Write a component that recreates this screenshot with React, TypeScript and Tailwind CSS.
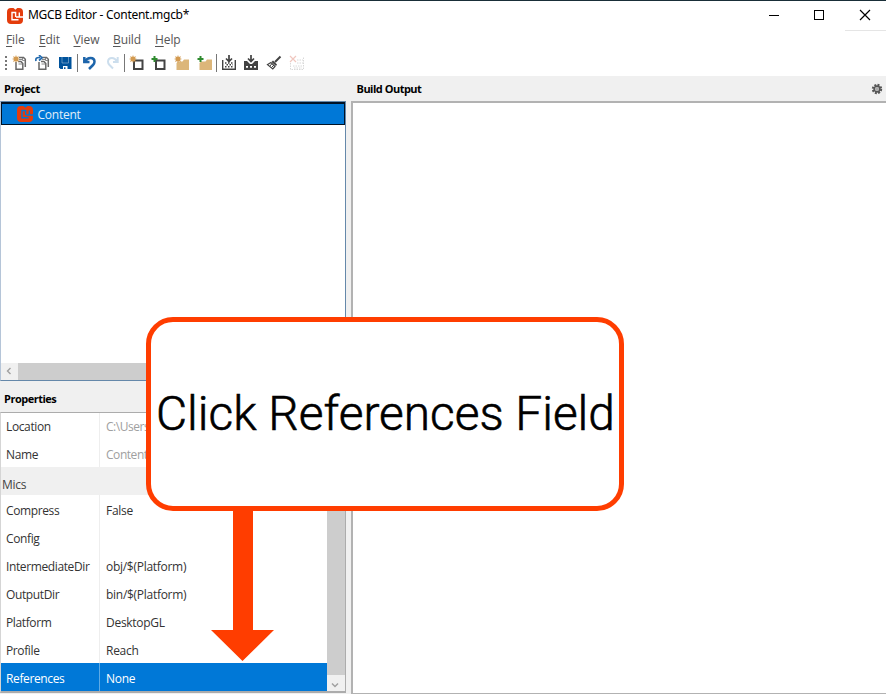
import type { ReactNode } from "react";

function Glyph({ x = "", children }: { x?: string; children: ReactNode }) {
  return (
    <svg viewBox="0 0 16 16" className={`h-4 w-4 shrink-0 ${x}`} fill="none">
      {children}
    </svg>
  );
}

function Logo({ slit }: { slit: string }) {
  return (
    <svg viewBox="0 0 16 16" className="h-4 w-4 shrink-0" fill="none">
      <path
        d="M4 0H6.5L8.4 1.8L10.3 0H12Q16 0 16 4V12Q16 16 12 16H4Q0 16 0 12V4Q0 0 4 0Z"
        fill="#e43c0c"
      />
      <path d="M16 9H9M12.3 8.5V4.5M8.6 9V4.5H5V11.8H11.5" stroke={slit} strokeWidth="1.4" />
    </svg>
  );
}

const Star = () => (
  <path
    d="M4 0L4.8 2L7 1.2L6 3.2L8 4L6 4.8L7 7L4.8 6L4 8L3.2 6L1 7L2 4.8L0 4L2 3.2L1 1.2L3.2 2Z"
    fill="#d39a50"
  />
);
const Plus = () => <path d="M3.5 1V7M.5 4H6.5" stroke="#2f8b2f" strokeWidth="2" />;
const Pages = () => (
  <>
    <path d="M7 2.5H11.5L13.3 4.3V12M4 7V14.2H10.8V8.5L9 6.5H6" stroke="#686868" strokeWidth="1.5" />
    <path d="M6.5 9H10M7 4.5H11M10.5 3V5.5H13" stroke="#888" />
  </>
);
const Box = () => <path d="M5 5.5H13.5V14H5Z" stroke="#444" strokeWidth="2" />;
const Folder = () => <path d="M2.5 8L4 6.5H8.5L10 4.5H15V15H2.5Z" fill="#dcb67a" />;

function BuildGlyph({ solid = false }: { solid?: boolean }) {
  return (
    <>
      <path d="M8 0V6M5 3.5L8 6.5L11 3.5" stroke="#424242" strokeWidth="1.7" />
      {solid ? (
        <>
          <path d="M1 6H4L7 9H9L12 6H15V15H1Z" fill="#424242" />
          <path d="M3 11.8H13" stroke="#fff" strokeWidth="1.8" strokeDasharray="2 2" />
        </>
      ) : (
        <>
          <path d="M1.7 5V14.3H14.3V5" stroke="#424242" strokeWidth="1.4" />
          <path d="M4 8H13M4 11.7H13" stroke="#424242" strokeWidth="1.5" strokeDasharray="1.5 1.5" />
          <path d="M5.5 9.8H12" stroke="#424242" strokeWidth="1.4" strokeDasharray="1.5 1.5" />
        </>
      )}
    </>
  );
}

function Toolbar() {
  return (
    <div className="flex h-[24px] items-center pb-[3px] pl-[5px]">
      <div className="flex w-[2px] flex-col gap-[2px]">
        <i className="h-[2px] bg-[#777]" />
        <i className="h-[2px] bg-[#777]" />
        <i className="h-[2px] bg-[#777]" />
        <i className="h-[2px] bg-[#777]" />
      </div>
      <Glyph x="ml-[5px]"><Pages /><Star /></Glyph>
      <Glyph x="ml-[7px]">
        <Pages />
        <path d="M1 6Q0 2 5 2.6M4 0L7 2.8L4 5.5" stroke="#246bae" strokeWidth="1.7" />
      </Glyph>
      <Glyph x="ml-[6px]">
        <path d="M2 2H14.5V14H3.5L2 12.5Z" fill="#00539c" />
        <path d="M5 2V8H11.5V2" stroke="#b8cfe3" strokeWidth=".5" />
        <path d="M6 11H10.5V14H8.5V12.2H7V14H6Z" fill="#fff" />
      </Glyph>
      <i className="ml-[4px] h-[18px] w-px bg-[#777]" />
      <Glyph x="ml-[4px]">
        <path d="M2.3 2V7H7.5M3 6.5Q5 3 8.5 3Q12.5 3 12.5 6.8Q12.5 8.5 11 10L7 14" stroke="#1d65ab" strokeWidth="2.5" />
      </Glyph>
      <Glyph x="ml-[7px]">
        <path d="M12.7 2V7H8M12 6.5Q10 3 7 3Q3 3 3 6.8Q3 8.5 4.5 10L8 13.5" stroke="#ccdeed" strokeWidth="2" />
      </Glyph>
      <i className="ml-[3px] h-[18px] w-px bg-[#777]" />
      <Glyph x="ml-[4px]"><Box /><Star /></Glyph>
      <Glyph x="ml-[6px]"><Box /><Plus /></Glyph>
      <Glyph x="ml-[7px]"><Folder /><Star /></Glyph>
      <Glyph x="ml-[7px]"><Folder /><Plus /></Glyph>
      <i className="ml-[3px] h-[18px] w-px bg-[#777]" />
      <Glyph x="ml-[4px]"><BuildGlyph /></Glyph>
      <Glyph x="ml-[6px]"><BuildGlyph solid /></Glyph>
      <Glyph x="ml-[7px]">
        <path d="M14.5 1.5L9 7" stroke="#424242" strokeWidth="2" />
        <path d="M7 5.5L11 9.5L10 11L5.5 7Z" fill="#424242" />
        <path d="M5 7.6L9 11.5L6.8 14L1.5 9.6Z" stroke="#424242" strokeWidth="1.2" />
        <path d="M4 11L6 8.5M5.5 12.5L8 10" stroke="#424242" strokeWidth="1" />
      </Glyph>
      <Glyph x="ml-[7px]">
        <path d="M1.5 8V14.5H14.5V2M4 11H13M5 13H13M8 8H14M8 5H14" stroke="#d8d8d8" strokeDasharray="1.5 1" />
        <path d="M1 1L7 7M7 1L1 7" stroke="#f0c7bf" strokeWidth="1.2" />
      </Glyph>
    </div>
  );
}

const rows = [
  ["Compress", "False"],
  ["Config", ""],
  ["IntermediateDir", "obj/$(Platform)"],
  ["OutputDir", "bin/$(Platform)"],
  ["Platform", "DesktopGL"],
  ["Profile", "Reach"],
  ["References", "None"],
];

function Row({ label, value, muted = false }: { label: string; value: string; muted?: boolean }) {
  const active = label === "References";
  return (
    <div className={`flex h-7 shrink-0 items-center pt-[4px] ${active ? "bg-[#0078d7] text-white" : "text-[#333]"}`}>
      <span className="w-[98px] pl-[5px] tracking-[-0.38px]">{label}</span>
      <span className={`-mt-[4px] h-7 w-px ${active ? "bg-[#5eaae5]" : "bg-[#eee]"}`} />
      <span className={`pl-[6px] ${muted ? "tracking-[-0.45px] text-[#a0a0a0]" : "tracking-[-0.28px]"}`}>{value}</span>
    </div>
  );
}

const menus = [
  ["File", "w-[33px]"],
  ["Edit", "w-[34.5px]"],
  ["View", "w-[39.5px]"],
  ["Build", "w-[42px]"],
  ["Help", "w-[40px]"],
];

export default function App() {
  return (
    <div className="relative flex h-[694px] w-[886px] flex-col overflow-hidden bg-white font-['Open_Sans','Noto_Sans',sans-serif] text-[12px] leading-4 tracking-[-0.1px] whitespace-nowrap">
      <div className="h-px shrink-0 bg-[#192e38]" />
      <header className="flex h-[29px] shrink-0 items-center pl-[7px] text-black">
        <Logo slit="#fff" />
        <span className="-mt-[2px] ml-[5px] font-['Noto_Sans',sans-serif] tracking-[-0.28px]">MGCB Editor - Content.mgcb*</span>
        <svg viewBox="0 0 110 12" className="mt-[-2px] mr-[12px] ml-auto h-3 w-[110px]" fill="none" stroke="#000" shapeRendering="crispEdges">
          <path d="M5 6.5H15M50.5 1.5H59.5V10.5H50.5Z" />
          <path d="M96 1L106 11M106 1L96 11" shapeRendering="auto" strokeWidth="1.2" />
        </svg>
      </header>
      <nav className="flex h-[22px] shrink-0 items-center pb-[2px] pl-[6px] text-[#555]">
        {menus.map(([m, w]) => (
          <span key={m} className={w}>
            <span className="underline underline-offset-2">{m[0]}</span>
            {m.slice(1)}
          </span>
        ))}
        <i className="-mt-[19px] ml-auto h-px w-[41px] bg-[#e5e5e5]" />
      </nav>
      <Toolbar />
      <main className="flex h-[618px] bg-[#f0f0f0]">
        <section className="flex w-[346px] flex-col">
          <h2 className="h-[25px] pt-[5px] pl-[4px] text-[11px] font-bold tracking-[-0.45px]">Project</h2>
          <div className="flex h-[280px] flex-col border border-[#6588aa] border-l-[#b5c5d8] bg-white">
            <div className="flex h-[23px] items-center border border-t-2 border-[#001225] bg-[#0078d7] pl-[15px] text-[#e2eef8]">
              <Logo slit="#0078d7" />
              <span className="mt-px ml-[4.5px] tracking-[-0.25px]">Content</span>
            </div>
            <div className="mt-auto flex h-[17px] bg-[#cdcdcd]">
              <span className="flex w-[17px] items-center justify-center bg-[#f0f0f0] pr-[2px] pb-[2px]">
                <svg viewBox="0 0 8 8" className="h-2 w-2" fill="none" stroke="#a0a0a0" strokeWidth="1.4">
                  <path d="M5.5 1L2.5 4L5.5 7" />
                </svg>
              </span>
            </div>
          </div>
          <h2 className="h-[31px] pt-[10px] pl-[4px] text-[11px] font-bold tracking-[-0.5px]">Properties</h2>
          <div className="flex h-[281px] border border-b-2 border-[#acacac] border-l-[#d5d5d5] bg-white">
            <div className="flex w-[326px] flex-col justify-end overflow-hidden">
              <Row label="Location" value="C:\Users" muted />
              <Row label="Name" value="Content" muted />
              <div className="h-7 shrink-0 bg-[#f0f0f0] pt-[10px] pl-px tracking-[-0.3px] text-[#444]">Mics</div>
              {rows.map(([l, v]) => (
                <Row key={l} label={l} value={v} />
              ))}
            </div>
            <div className="flex flex-1 flex-col justify-end bg-[#cdcdcd]">
              <span className="flex h-4 items-center justify-center bg-[#f0f0f0] pt-[3px] pr-[2px]">
                <svg viewBox="0 0 8 8" className="h-2 w-2" fill="none" stroke="#a0a0a0" strokeWidth="1.5">
                  <path d="M1 2.5L4 5.5L7 2.5" />
                </svg>
              </span>
            </div>
          </div>
        </section>
        <section className="ml-[5px] flex flex-1 flex-col">
          <div className="flex h-[25px] items-center justify-between pr-[3px] pl-[5.5px]">
            <h2 className="text-[11px] font-bold tracking-[-0.5px]">Build Output</h2>
            <svg viewBox="0 0 12 12" className="h-3 w-3" fill="none">
              <circle cx="6" cy="6" r="4.2" stroke="#555" strokeWidth="2" strokeDasharray="2 1.3" />
              <circle cx="6" cy="6" r="2.8" stroke="#555" strokeWidth="1.8" />
              <circle cx="6" cy="6" r="1.9" fill="#aaa" />
            </svg>
          </div>
          <div className="h-[593px] border-y border-t-2 border-l-2 border-[#b2b2b2] bg-white" />
        </section>
      </main>
      <div className="absolute top-[317px] left-[146px] flex h-[194px] w-[478px] items-center justify-center rounded-[27px] border-[5px] border-[#ff3d00] bg-white pl-[1px] font-['Roboto',sans-serif] text-[47.8px] leading-[56px] font-light tracking-normal text-black [-webkit-text-stroke:0.6px_black]">
        Click References Field
      </div>
      <svg viewBox="0 0 64 151" className="absolute top-[510px] left-[211px] h-[151px] w-[64px]">
        <path d="M22 0H42V120H63L31.5 151L0 120H22Z" fill="#ff3d00" />
      </svg>
    </div>
  );
}
